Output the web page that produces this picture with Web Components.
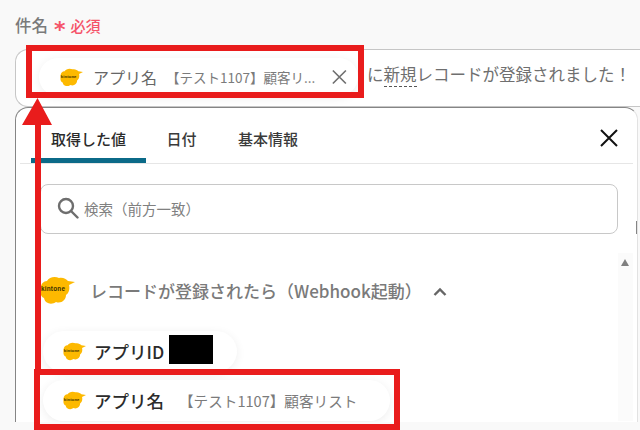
<!DOCTYPE html>
<html lang="ja">
<head>
<meta charset="utf-8">
<title>件名</title>
<style>
  html, body {
    margin: 0;
    width: 640px;
    height: 430px;
    overflow: hidden;
    background: #f9f9f9;
    font-family: "Noto Sans CJK JP", "Noto Sans", sans-serif;
  }
</style>
</head>
<body>
<subject-form></subject-form>
<script>
"use strict";

class KintoneLogo extends HTMLElement {
  constructor() {
    super();
    const size = this.getAttribute('size') || 24;
    const root = this.attachShadow({ mode: 'open' });
    root.innerHTML = `
    <style>
      :host { display: block; flex: none; line-height: 0; }
      text { font-family: "Liberation Sans", sans-serif; font-weight: 700; fill: #3a3000; }
    </style>
    <svg width="${size}" height="${size * 0.8}" viewBox="0 0 35 28">
      <path fill="#fdb900" d="M1 14C0 9 3 5 7 5 9 1 15 0 19 2 23 1 26 3 28 5L35 6 29 9C30 13 29 17 26 19 26 24 21 28 16 26 12 29 5 28 4 22 1 21 0 17 1 14Z"/>
      <text x="1" y="15" font-size="6.4" textLength="24">kintone</text>
    </svg>`;
  }
}
customElements.define('kintone-logo', KintoneLogo);

class ValueChip extends HTMLElement {
  constructor() {
    super();
    const root = this.attachShadow({ mode: 'open' });
    root.innerHTML = `
    <style>
      :host {
        display: inline-flex;
        align-items: center;
        height: 41px;
        box-sizing: border-box;
        padding: 0 16px 0 20px;
        border-radius: 21px;
        background: #fff;
        box-shadow: 0 2px 10px rgba(0,0,0,.07);
        white-space: nowrap;
      }
      kintone-logo { margin-right: var(--logo-gap, 8px); }
      .name { font-size: var(--chip-size, 17.5px); font-weight: var(--chip-weight, 500); color: var(--chip-name, #2b2b2b); }
      .value { font-size: var(--value-size, 14.6px); color: #7b7b7b; margin-left: var(--chip-gap, 15px); }
      ::slotted([slot=after]) { margin-left: 16px; }
    </style>
    <kintone-logo size="23"></kintone-logo>
    <span class="name"><slot name="name"></slot></span>
    <span class="value"><slot name="value"></slot></span>
    <slot name="after"></slot>`;
  }
}
customElements.define('value-chip', ValueChip);

class TabBar extends HTMLElement {
  constructor() {
    super();
    const root = this.attachShadow({ mode: 'open' });
    root.innerHTML = `
    <style>
      :host {
        display: flex;
        align-items: flex-start;
        height: 56px;
        margin: 0 4px 0 4px;
        box-sizing: border-box;
        border-bottom: 1px solid #e6e6e6;
        font-size: 15px;
        font-weight: 500;
        color: #3a3a3a;
      }
      .tab { height: 55px; display: flex; align-items: center; justify-content: center; box-sizing: border-box; padding-top: 5px; }
      .tab.on { width: 115px; margin-left: 11px; color: #2b2b2b; border-bottom: 5px solid #0b6a88; border-radius: 5px 5px 0 0; padding-top: 10px; }
      .tab.date { width: 67px; margin-left: 2px; }
      .tab.info { width: 62px; margin-left: 22px; }
      button { all: unset; margin-left: auto; margin-right: 14px; margin-top: 20px; line-height: 0; }
    </style>
    <div class="tab on">取得した値</div>
    <div class="tab date">日付</div>
    <div class="tab info">基本情報</div>
    <button aria-label="閉じる">
      <svg width="20" height="20" viewBox="0 0 20 20"><path d="M2 2 18 18M18 2 2 18" stroke="#111" stroke-width="2" fill="none"/></svg>
    </button>`;
  }
}
customElements.define('tab-bar', TabBar);

class SearchBox extends HTMLElement {
  constructor() {
    super();
    const root = this.attachShadow({ mode: 'open' });
    root.innerHTML = `
    <style>
      :host {
        display: flex;
        align-items: center;
        gap: 5px;
        height: 50px;
        box-sizing: border-box;
        margin: 20px 19px 0 24px;
        padding: 0 0 2px 16px;
        border: 1px solid #c8c8c8;
        border-radius: 8px;
        background: #fff;
        color: #808080;
        font-size: 14.5px;
      }
    </style>
    <svg width="22" height="22" viewBox="0 0 22 22" fill="none" stroke="#6e6e6e" stroke-width="2.4">
      <circle cx="9" cy="9" r="7"/><path d="M14 14 20.5 20.5" stroke-linecap="round"/>
    </svg>
    <slot></slot>`;
  }
}
customElements.define('search-box', SearchBox);

class ResultPanel extends HTMLElement {
  constructor() {
    super();
    const root = this.attachShadow({ mode: 'open' });
    root.innerHTML = `
    <style>
      :host {
        display: block;
        position: relative;
        box-sizing: border-box;
        height: 315px;
        margin-right: 2px;
        background: #fff;
        border: 1px solid #858585;
        border-right-color: #e2e2e2;
        border-bottom: 0;
        border-radius: 13px 13px 0 0;
        overflow: hidden;
      }
      .group {
        display: flex;
        align-items: center;
        height: 36px;
        margin: 38px 0 0 24px;
        font-size: 17px;
        font-weight: 500;
        color: #7a7a7a;
      }
      .group kintone-logo { margin-right: 15px; }
      .group svg.chev { margin: 3px 0 0 11px; }
      .chips { display: flex; flex-direction: column; align-items: flex-start; gap: 8px; margin: 23px 0 0 27px; }
      .bar {
        position: absolute;
        left: 602px;
        top: 145px;
        width: 15px;
        height: 168px;
        background: #fbfbfb;
      }
      .bar::before {
        content: "";
        position: absolute;
        left: 3px;
        top: 6px;
        border: 4.5px solid transparent;
        border-top: 0;
        border-bottom: 7px solid #808080;
      }
      .edge { position: absolute; right: 0; top: 113px; width: 1px; height: 13px; background: #858585; }
      .redact { display: block; width: 44px; height: 29px; margin-bottom: 4px; background: #000; }
      .chip-id { --chip-gap: 5px; padding-right: 24px; }
      .chip-name { width: 347px; box-sizing: border-box; }
    </style>
    <tab-bar></tab-bar>
    <search-box>検索（前方一致）</search-box>
    <div class="group">
      <kintone-logo size="35"></kintone-logo>
      <span>レコードが登録されたら（Webhook起動）</span>
      <svg class="chev" width="14" height="10" viewBox="0 0 14 10" fill="none" stroke="#666" stroke-width="2.4"><path d="M1.5 8 7 2.5 12.5 8"/></svg>
    </div>
    <div class="chips">
      <value-chip class="chip-id"><span slot="name">アプリID</span><span slot="value" class="redact"></span></value-chip>
      <value-chip class="chip-name"><span slot="name">アプリ名</span><span slot="value">【テスト1107】顧客リスト</span></value-chip>
    </div>
    <div class="bar"></div>
    <div class="edge"></div>`;
  }
}
customElements.define('result-panel', ResultPanel);

class RedBox extends HTMLElement {
  constructor() {
    super();
    const root = this.attachShadow({ mode: 'open' });
    root.innerHTML = `
    <style>
      :host {
        position: absolute;
        box-sizing: border-box;
        border: 6px solid #e91c1c;
        pointer-events: none;
      }
    </style>`;
  }
}
customElements.define('red-box', RedBox);

class SubjectForm extends HTMLElement {
  constructor() {
    super();
    const root = this.attachShadow({ mode: 'open' });
    root.innerHTML = `
    <style>
      :host {
        display: block;
        position: relative;
        width: 640px;
        height: 430px;
        box-sizing: border-box;
        padding: 13px 0 0 15px;
        overflow: hidden;
      }
      .label { height: 24px; line-height: 24px; font-size: 16.5px; font-weight: 500; color: #7a7a7a; display: flex; align-items: center; }
      .label b { color: #f5546a; font-family: "DejaVu Sans", sans-serif; font-size: 22px; font-weight: 700; margin: 0 4px 0 6px; height: 24px; line-height: 33px; }
      .label small { color: #f5546a; font-size: 15px; font-weight: 500; padding-top: 2px; margin-left: 1px; }
      .field {
        display: flex;
        align-items: center;
        height: 58px;
        margin: 12px -10px 0 0;
        padding: 0 0 8px 23px;
        box-sizing: border-box;
        background: #fff;
        border: 1px solid #c6c6c6;
        border-right: 0;
        border-radius: 13px 0 0 13px;
        font-size: 16.5px;
        color: #6f6f6f;
        white-space: nowrap;
      }
      .field value-chip {
        --chip-gap: 9px;
        --chip-name: #666;
        --chip-size: 16px;
        --chip-weight: 400;
        --value-size: 13.5px;
        --logo-gap: 10px;
        flex: none;
        width: 319px;
        height: 38px;
        box-sizing: border-box;
        padding: 0 10px 0 21px;
        margin: 6px 9px 0 0;
      }
      .field u { text-decoration: none; border-bottom: 1px dashed #555; }
      .x { line-height: 0; display: block; }
      .box1 { left: 26px; top: 45px; width: 338px; height: 53px; }
      .box2 { left: 34px; top: 369px; width: 366px; height: 61px; }
      .arrow { position: absolute; left: 0; top: 0; }
    </style>
    <div class="label">件名<b>*</b><small>必須</small></div>
    <div class="field">
      <value-chip>
        <span slot="name">アプリ名</span>
        <span slot="value">【テスト1107】顧客リ...</span>
        <svg slot="after" class="x" width="18" height="18" viewBox="0 0 18 18"><path d="M2 2 16 16M16 2 2 16" stroke="#707070" stroke-width="1.8" fill="none"/></svg>
      </value-chip>
      <span>に<u>新規</u>レコードが登録されました！</span>
    </div>
    <result-panel></result-panel>
    <red-box class="box1"></red-box>
    <red-box class="box2"></red-box>
    <svg class="arrow" width="640" height="430">
      <path fill="#e91c1c" d="M35 125H22L37.5 98 52 125H41V370H35Z"/>
    </svg>`;
  }
}
customElements.define('subject-form', SubjectForm);
</script>
</body>
</html>
